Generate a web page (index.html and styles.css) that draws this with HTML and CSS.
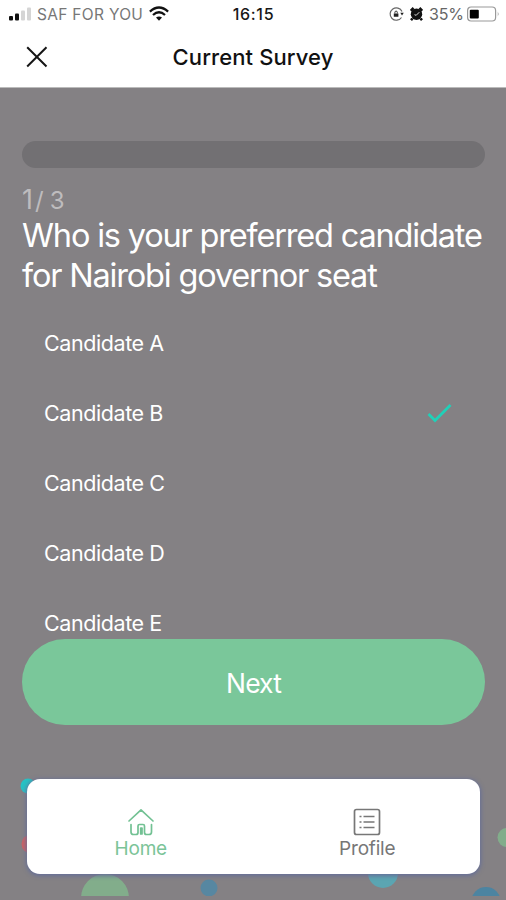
FILE: index.html
```html
<!DOCTYPE html>
<html lang="en">
<head>
<meta charset="utf-8">
<title>Current Survey</title>
<link rel="stylesheet" href="styles.css">
</head>
<body>
<div class="app">
  <div class="status">
    <div class="carrier">
      <svg width="24" height="16" viewBox="0 0 24 16"><rect x="0" y="10" width="4" height="4.500" rx="1" fill="#111"/><rect x="6" y="7.500" width="4" height="7" rx="1" fill="#111"/><rect x="12" y="4.500" width="4" height="10" rx="1" fill="#d5d5d5"/><rect x="18" y="1.500" width="4" height="13" rx="1" fill="#d5d5d5"/></svg>
      <span class="carrier-name">SAF FOR YOU</span>
      <svg width="20" height="16" viewBox="0 0 20 16" fill="none" stroke="#111" stroke-width="2.300"><path d="M.9 5.600Q10-2.600 19.100 5.600M4 9Q10 3.600 16 9"/><path d="M7 11.600Q10 9.200 13 11.600L10 14.700Z" fill="#111" stroke="none"/></svg>
    </div>
    <time class="clock">16:15</time>
    <div class="indicators">
      <svg width="15" height="16" viewBox="0 0 15 16" fill="none" stroke="#666"><path d="M12.500 11.500A6.200 6.200 0 1 1 13 5.500" stroke-width="1.200"/><path d="M11.300 6.700h3.500L13 9.500zM4.800 7.500h4.600v3.300H4.800z" fill="#222" stroke="none"/><path d="M5.900 7.500V6.300a1.200 1.200 0 0 1 2.400 0v1.200" stroke="#333"/></svg>
      <svg class="alarm" width="13" height="16" viewBox="0 0 13 16"><circle cx="6.500" cy="8.300" r="5.700" fill="#111"/><path d="M.8 4.800 3.600 2M12.200 4.800 9.400 2M2.500 12.500 1 14.200M10.500 12.500 12 14.200" stroke="#111" stroke-width="2.600"/><path d="M4.500 8.700 6.200 9.300 9.300 6.200" stroke="#ddd" stroke-width="1" fill="none"/></svg>
      <span class="percent">35%</span>
      <svg width="33" height="16" viewBox="0 0 33 16"><rect x=".6" y="1" width="28" height="14" rx="3.500" fill="#fff" stroke="#999" stroke-width="1.200"/><rect x="2.800" y="3.700" width="9" height="8.800" rx="1" fill="#000"/><path d="M30.800 5.500q1.600 2.500 0 5z" fill="#888"/></svg>
    </div>
  </div>
  <header class="header">
    <svg class="close" width="22" height="22" viewBox="0 0 22 22"><path d="M1.200 1.200 20.500 20.500M20.500 1.200 1.200 20.500" stroke="#161616" stroke-width="2"/></svg>
    <h1 class="title">Current Survey</h1>
  </header>
  <main class="survey">
    <div class="progress"></div>
    <div class="step"><span class="step-now">1</span><span class="step-total">/ 3</span></div>
    <h2 class="question"><span class="line">Who is your preferred candidate</span><span class="line">for Nairobi governor seat</span></h2>
    <ul class="options">
      <li><span>Candidate A</span></li>
      <li><span>Candidate B</span><svg class="check" width="26" height="20" viewBox="0 0 26 20"><path d="M1.500 11 8 17.500 23.500 2" fill="none" stroke="#20d0b8" stroke-width="2.700"/></svg></li>
      <li><span>Candidate C</span></li>
      <li><span>Candidate D</span></li>
      <li><span>Candidate E</span></li>
    </ul>
    <button class="next"><span>Next</span></button>
  </main>
  <svg class="bubbles" width="506" height="136" viewBox="0 0 506 136"><circle cx="28" cy="22" r="7.500" fill="#27c1c4"/><circle cx="31" cy="80" r="9.500" fill="#cb6265"/><circle cx="105" cy="134" r="24" fill="#82ad8b"/><circle cx="209" cy="124" r="8.500" fill="#5787a1"/><circle cx="383" cy="109" r="15" fill="#5ba5b2"/><circle cx="486" cy="138" r="15" fill="#4c84a1"/><circle cx="507" cy="73.500" r="9.500" fill="#82ad8b"/><rect y="132" width="506" height="4" fill="#848184"/></svg>
  <nav class="tabs">
    <a class="tab tab-home">
      <svg width="28" height="28" viewBox="0 0 28 28" fill="none" stroke="#72c193" stroke-width="1.700" stroke-linecap="round" stroke-linejoin="round"><path d="M2 13 14 1.800 26 13M4 16.500V24a2.500 2.500 0 0 0 2.500 2.500H9a2 2 0 0 0 2-2V18a1.500 1.500 0 0 1 1.500-1.500h3.500a1.500 1.500 0 0 1 1.500 1.500v6.500a2 2 0 0 0 2 2H22a2.500 2.500 0 0 0 2.500-2.500v-7.500M13.700 26v-6h1.300v6"/></svg>
      <span>Home</span>
    </a>
    <a class="tab tab-profile">
      <svg width="28" height="28" viewBox="0 0 28 28" fill="none" stroke="#777" stroke-width="1.700"><rect x="1.500" y="1.500" width="25" height="25" rx="2"/><path d="M6.500 8.500h2M10.500 8.500h11M6.500 14h2M10.500 14h11M6.500 19.500h2M10.500 19.500h11"/></svg>
      <span>Profile</span>
    </a>
  </nav>
</div>
</body>
</html>
```
FILE: styles.css
```css
* { box-sizing: border-box; }
body { margin: 0; font-family: Inter, "Liberation Sans", sans-serif; }
.app { position: relative; width: 506px; height: 900px; overflow: hidden; background: #848184; display: flex; flex-direction: column; }
.status { height: 28px; flex: none; background: #fff; display: grid; grid-template-columns: 1fr auto 1fr; align-items: center; padding: 0 6px 0 7px; }
.carrier, .indicators { display: flex; align-items: center; }
.carrier { padding-left: 2px; }
.indicators { justify-content: flex-end; }
.carrier-name { width: 106px; margin: 1px 6px 0 4px; font-size: 15.5px; letter-spacing: .3px; color: #777; white-space: nowrap; }
.clock { font-size: 16px; font-weight: 500; color: #181818; letter-spacing: .7px; }
.alarm { margin: 0 6px; }
.percent { width: 36px; margin-right: 2px; font-size: 16px; color: #666; letter-spacing: -.2px; }
.header { height: 60px; flex: none; display: grid; grid-template-columns: 1fr auto 1fr; align-items: center; background: #fff; border-bottom: 1px solid #bbb; padding: 0 26px 1px; }
.title { grid-column: 2; margin: 0; font-size: 22px; font-weight: 500; letter-spacing: .1px; color: #111; white-space: nowrap; }
.survey { display: flex; flex-direction: column; padding: 53px 21px 0 22px; color: #fff; }
.progress { height: 27px; border-radius: 14px; background: #727073; }
.step { display: flex; align-items: baseline; margin-top: 15px; height: 33px; line-height: 34px; color: #bebcbe; font-size: 24px; }
.step-now { font-size: 27px; }
.step-total { margin-left: 2px; letter-spacing: -.3px; }
.question { margin: 0; font-size: 32.5px; font-weight: 400; line-height: 40px; letter-spacing: -1.18px; white-space: nowrap; }
.line { display: block; }
.options { list-style: none; margin: 12px 0 0; padding: 0 32px 0 22px; height: 331px; overflow: hidden; }
.options li { display: flex; justify-content: space-between; align-items: center; height: 70px; font-size: 21.5px; letter-spacing: -.42px; }
.next { flex: none; height: 86px; border: 0; border-radius: 43px; background: #7ac79a; color: #fff; font: 400 26.5px Inter, sans-serif; letter-spacing: -.9px; padding: 1px 0 0; }
.bubbles { position: absolute; left: 0; top: 764px; }
.tabs { position: absolute; left: 27px; top: 779px; width: 453px; height: 95px; border-radius: 13px; background: #fff; display: grid; grid-template-columns: 1fr 1fr; box-shadow: 0 1px 4px 1px #666f98; }
.tab { display: flex; flex-direction: column; align-items: center; padding: 29px 0 0 1px; font-size: 19px; line-height: 25px; letter-spacing: -.2px; }
.tab-home { color: #7bc498; }
.tab-profile { color: #777; }
```
